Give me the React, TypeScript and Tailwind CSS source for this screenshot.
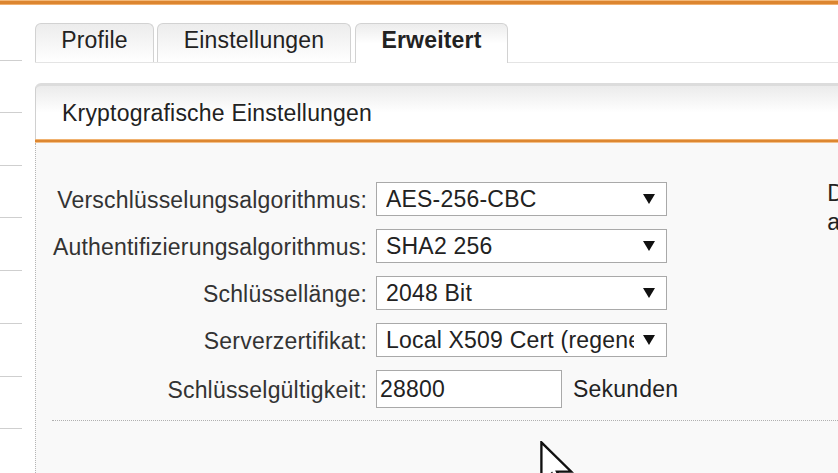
import React from "react";

const sideHeights = [56, 52, 53, 52, 53, 53, 53, 52, 60];

function Select({ value, clip }: { value: string; clip?: boolean }) {
  return (
    <div className="w-[291px] h-[34px] border border-[#a9a9a9] bg-white flex items-center pl-[9px] pr-[11px] shrink-0">
      <span className={"flex-1 whitespace-nowrap overflow-hidden leading-[28px] " + (clip ? "mr-[9px]" : "")}>{value}</span>
      <svg width="12" height="10" viewBox="0 0 12 10" className="shrink-0">
        <polygon points="0,0 12,0 6,10" fill="#111" />
      </svg>
    </div>
  );
}

function Row({ label, children }: { label: string; children: React.ReactNode }) {
  return (
    <div className="flex items-center">
      <div className="w-[331px] text-right text-[#333] whitespace-nowrap leading-[28px] pt-[2px]">{label}</div>
      <div className="ml-[9px] flex items-center">{children}</div>
    </div>
  );
}

export default function App() {
  return (
    <div className="w-[838px] h-[473px] overflow-hidden bg-white relative font-['Liberation_Sans',Arial,sans-serif] text-[23px] tracking-[0.2px] text-[#222]">
      <div className="h-[5px] bg-[#dc8530] border-t border-b border-t-[#f3b878] border-b-[#f0b070]" />
      <div className="flex">
        <div className="w-[22px] shrink-0 flex flex-col">
          {sideHeights.map((h, i) => (
            <div key={i} className="border-b border-[#cfcfcf]" style={{ height: h }} />
          ))}
        </div>
        <div className="ml-[13px] flex-1 min-w-0 flex flex-col">
          <div className="pt-[18px] flex items-end border-b border-[#e4e4e4] h-[58px]">
            <div className="w-[119px] h-[39px] border border-b-0 border-[#d2d2d2] rounded-t-[6px] bg-gradient-to-b from-[#ececec] to-white flex items-center justify-center pb-[6px] text-[#222]">
              Profile
            </div>
            <div className="ml-[3px] w-[194px] h-[39px] border border-b-0 border-[#d2d2d2] rounded-t-[6px] bg-gradient-to-b from-[#ececec] to-white flex items-center justify-center pb-[6px] text-[#222]">
              Einstellungen
            </div>
            <div className="ml-[4px] w-[153px] h-[40px] -mb-px border border-b-0 border-[#d2d2d2] rounded-t-[6px] bg-gradient-to-b from-[#ececec] via-white to-white flex items-center justify-center pb-[6px] font-bold text-[#222]">
              Erweitert
            </div>
          </div>
          <div className="h-[20px]" />
          <div className="h-[56px] border-t-[3px] border-l border-t-[#dcdcdc] border-l-[#d0d0d0] rounded-tl-[6px] bg-gradient-to-b from-[#ebebeb] via-white to-white flex items-center pl-[26px] pt-[2px]">
            Kryptografische Einstellungen
          </div>
          <div className="h-[4px] bg-[#dd8732] border-t border-b border-t-[#f0b270] border-b-[#f3c08a]" />
          <div className="bg-[#f9f9f9] border-l border-dotted border-[#b5b5b5] h-[340px]">
            <div className="flex">
              <div className="pt-[39px] flex flex-col gap-[13px] shrink-0">
                <Row label="Verschlüsselungsalgorithmus:">
                  <Select value="AES-256-CBC" />
                </Row>
                <Row label="Authentifizierungsalgorithmus:">
                  <Select value="SHA2 256" />
                </Row>
                <Row label="Schlüssellänge:">
                  <Select value="2048 Bit" />
                </Row>
                <Row label="Serverzertifikat:">
                  <Select value="Local X509 Cert (regenerated)" clip />
                </Row>
                <Row label="Schlüsselgültigkeit:">
                  <div className="w-[186px] h-[38px] border border-[#a9a9a9] bg-white flex items-center pl-[3px] leading-[28px]">
                    28800
                  </div>
                  <span className="ml-[11px] text-[#222] leading-[28px]">Sekunden</span>
                </Row>
              </div>
              <div className="ml-[149px] pt-[36px] leading-[29px] whitespace-nowrap text-[#222]">
                Diese Parameter müssen
                <br />
                auf beiden Seiten identisch sein.
              </div>
            </div>
            <div className="ml-[16px] mt-[12px] border-t border-dotted border-[#b0b0b0]" />
          </div>
        </div>
      </div>
      <svg
        className="absolute left-[540px] top-[441px]"
        width="34"
        height="52"
        viewBox="0 0 13 20"
      >
        <path
          d="M0.5,0.5 L0.5,16.5 L4.5,12.5 L7.5,19 L9.5,18 L6.5,11.8 L12,11.8 Z"
          fill="#fff"
          stroke="#111"
          strokeWidth="0.9"
          strokeLinejoin="miter"
        />
      </svg>
    </div>
  );
}
